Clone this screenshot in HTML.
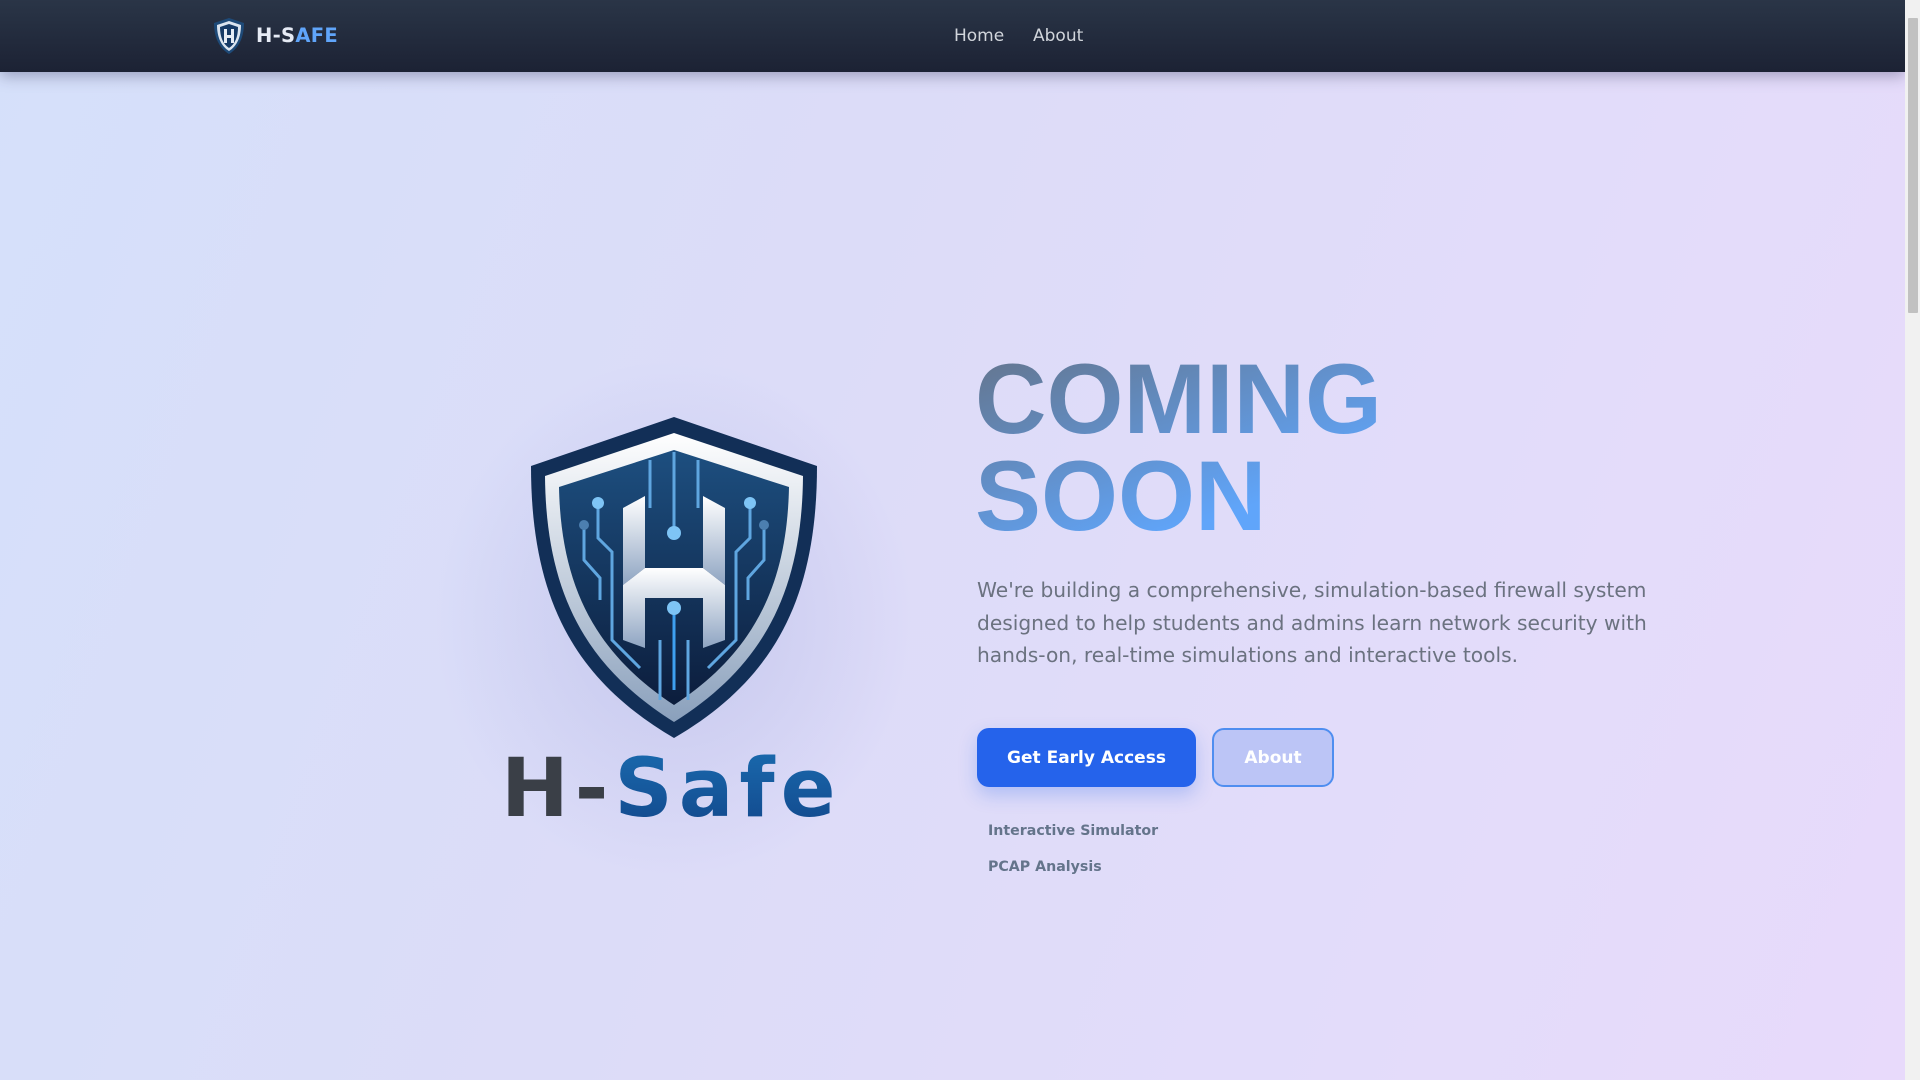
<!DOCTYPE html>
<html><head><meta charset="utf-8"><style>
*{margin:0;padding:0;box-sizing:border-box}
html,body{width:1920px;height:1080px;overflow:hidden}
body{font-family:"DejaVu Sans","Liberation Sans",sans-serif;background:linear-gradient(110deg,#d5e0fa 0%,#dcdcf8 40%,#e3dcfa 75%,#e8dafb 100%);position:relative}
.nav{position:absolute;left:0;top:0;width:1905px;height:72px;background:linear-gradient(#2a3547,#1c2234);box-shadow:0 4px 14px rgba(40,40,80,.35)}
.brand{position:absolute;left:256px;top:24px;font-weight:bold;font-size:19.5px;color:#e6ebf5;letter-spacing:.3px}
.brand span{color:#60a5fa}
.nl{position:absolute;top:26px;font-size:17px;color:#d1d5db}
.sb{position:absolute;right:0;top:0;width:15px;height:1080px;background:#f1f1f1}
.sb i{position:absolute;left:3px;top:18px;width:10px;height:295px;background:#c1c1c1;border-radius:1px}
h1{position:absolute;left:975px;top:350px;font-family:"Liberation Sans",sans-serif;font-weight:bold;font-size:99px;line-height:97px;background:linear-gradient(160deg,#64748b 0%,#60a5fa 75%);-webkit-background-clip:text;background-clip:text;color:transparent}
p.d{position:absolute;left:977px;top:574px;width:680px;font-size:20.2px;line-height:32.5px;color:#6b7280}
.b1{position:absolute;left:977px;top:728px;width:219px;height:59px;border-radius:12px;background:#2563eb;color:#fff;font-weight:bold;font-size:17px;display:flex;align-items:center;justify-content:center;box-shadow:0 8px 18px rgba(37,99,235,.25)}
.b2{position:absolute;left:1212px;top:728px;width:122px;height:59px;border-radius:12px;background:#bcc5f6;border:2px solid #4f8ef0;color:#fff;font-weight:bold;font-size:17px;display:flex;align-items:center;justify-content:center}
.f{position:absolute;left:988px;font-weight:bold;font-size:14.2px;color:#64748b}
</style></head><body>
<div class="nav">
<svg style="position:absolute;left:212px;top:17px" width="34" height="38" viewBox="0 0 34 38"><path d="M17 1 L2 6 C2 20 7 31 17 37 C27 31 32 20 32 6 Z" fill="#1e4a78"/><path d="M17 4 L5 8 C5 20 9 29 17 34 C25 29 29 20 29 8 Z" fill="#dbe4ef"/><path d="M17 7 L8 10 C8 20 11 27 17 31 C23 27 26 20 26 10 Z" fill="#163a66"/><path d="M12 12h3v6h4v-6h3v14h-3v-5h-4v5h-3z" fill="#e6ecf5"/></svg>
<div class="brand">H-S<span>AFE</span></div>
<div class="nl" style="left:954px">Home</div>
<div class="nl" style="left:1033px">About</div>
</div>
<div class="sb"><i></i></div>
<svg style="position:absolute;left:0;top:0" width="1920" height="1080">
<defs>
<radialGradient id="sh" cx="50%" cy="50%" r="50%"><stop offset="0" stop-color="#9aa0d8" stop-opacity=".35"/><stop offset="1" stop-color="#9aa0d8" stop-opacity="0"/></radialGradient>
<linearGradient id="rim" x1="0" y1="0" x2="0" y2="1"><stop offset="0" stop-color="#fff"/><stop offset="1" stop-color="#8aa0bc"/></linearGradient>
<linearGradient id="inn" x1="0" y1="0" x2="0" y2="1"><stop offset="0" stop-color="#1d4f80"/><stop offset="1" stop-color="#0c1d3c"/></linearGradient>
<linearGradient id="hg" x1="0" y1="0" x2="0" y2="1"><stop offset="0" stop-color="#ffffff"/><stop offset="1" stop-color="#8ea4c2"/></linearGradient>
<linearGradient id="tx" x1="0" y1="0" x2="0" y2="1"><stop offset="0" stop-color="#1a6cb0"/><stop offset="1" stop-color="#12468a"/></linearGradient>
</defs>
<ellipse cx="674" cy="620" rx="240" ry="260" fill="url(#sh)"/>
<path d="M674 417 L531 466 C531 600 575 680 674 738 C773 680 817 600 817 466 Z" fill="#122f57"/>
<path d="M674 433 L545 476 C546 596 588 668 674 722 C760 668 802 596 803 476 Z" fill="url(#rim)"/>
<path d="M674 450 L559 487 C561 590 598 655 674 705 C750 655 787 590 789 487 Z" fill="url(#inn)"/>
<g fill="url(#hg)">
<path d="M623 508 L645 496 L645 568 L623 585 Z"/>
<path d="M703 496 L725 508 L725 585 L703 568 Z"/>
<path d="M623 585 L645 568 L703 568 L725 585 L725 640 L703 648 L703 598 L645 598 L645 648 L623 640 Z"/>
</g>
<g stroke="#5fa6e0" stroke-width="3" fill="none">
<path d="M674 452 V532"/><path d="M698 460 V508"/><path d="M650 460 V508"/>
<path d="M598 503 V538 L612 552 V640 L640 668"/><path d="M750 503 V538 L736 552 V640 L708 668"/>
<path d="M584 525 V560 L600 578 V600"/><path d="M764 525 V560 L748 578 V600"/>
<path d="M674 608 V690" stroke="#3ea0f0"/><path d="M660 640 V700"/><path d="M688 640 V700"/>
</g>
<g fill="#7ec4f5"><circle cx="674" cy="533" r="7"/><circle cx="598" cy="503" r="6"/><circle cx="750" cy="503" r="6"/><circle cx="674" cy="608" r="7"/><circle cx="584" cy="525" r="5" fill="#4c7fb0"/><circle cx="764" cy="525" r="5" fill="#4c7fb0"/></g>
<text x="501" y="816" font-family="DejaVu Sans,sans-serif" font-weight="bold" font-size="81" letter-spacing="6" fill="#3a3f47">H-<tspan fill="url(#tx)">Safe</tspan></text>
</svg>
<h1>COMING<br>SOON</h1>
<p class="d">We're building a comprehensive, simulation-based firewall system designed to help students and admins learn network security with hands-on, real-time simulations and interactive tools.</p>
<div class="b1">Get Early Access</div>
<div class="b2">About</div>
<div class="f" style="top:823px">Interactive Simulator</div>
<div class="f" style="top:859px">PCAP Analysis</div>
</body></html>
